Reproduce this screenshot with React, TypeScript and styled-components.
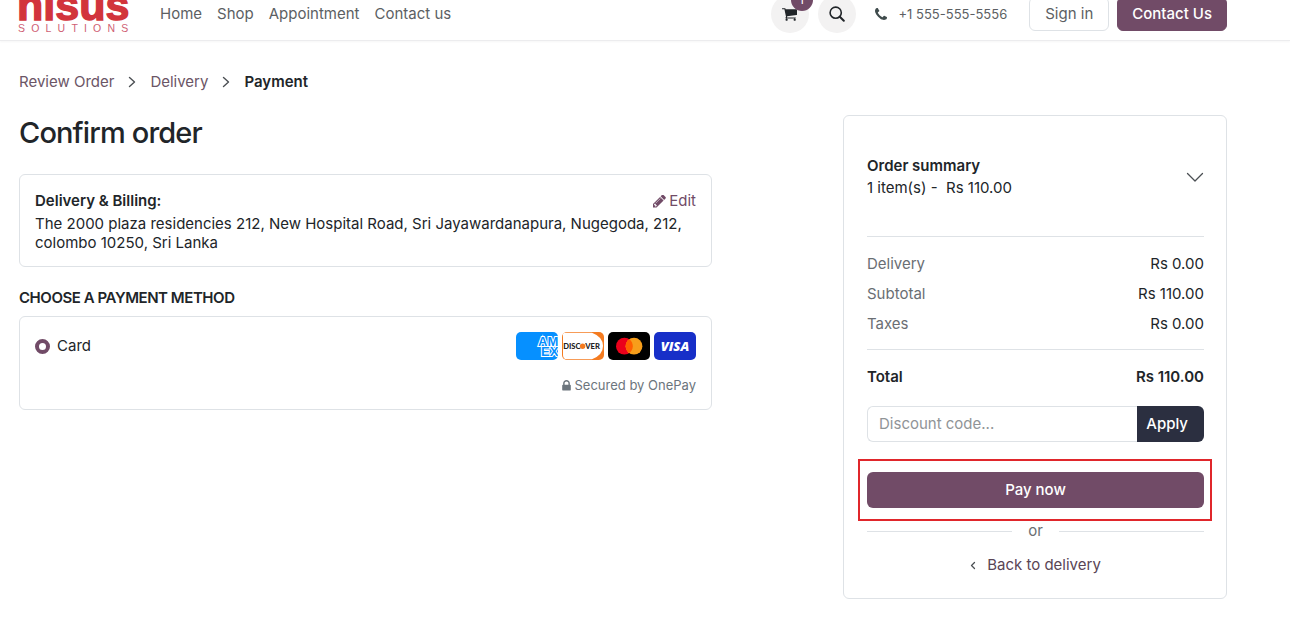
import React from "react";
import styled, { createGlobalStyle } from "styled-components";

const plum = "#714b67";
const ink = "#212529";
const line = "#dee2e6";
const headingTracking = "-0.03em";

const GlobalStyle = createGlobalStyle`
  *, *::before, *::after { box-sizing: border-box; }
  body {
    margin: 0;
    background: #fff;
    color: ${ink};
    font-family: Inter, "Liberation Sans", sans-serif;
    font-size: 15px;
    line-height: 22px;
  }
  button, input { font: inherit; }
  a { text-decoration: none; }
`;

/* ---------- Header ---------- */

const Header = styled.header`
  overflow: hidden;
  padding: 0 63px 7px 18px;
  border-bottom: 1px solid #ececee;
  box-shadow: 0 1px 2px rgba(0, 0, 0, 0.04);
`;

const HeaderRow = styled.div`
  display: flex;
  align-items: center;
  height: 38px;
  margin-top: -5px;
`;

const LogoLink = styled.a`
  display: flex;
  align-self: flex-end;
  margin-right: 29px;
`;

const Nav = styled.nav`
  display: flex;
  gap: 15px;
  margin-right: auto;

  a { color: #5c5f63; }
`;

const RoundButton = styled.button`
  position: relative;
  display: flex;
  align-items: center;
  justify-content: center;
  width: 38px;
  height: 38px;
  margin-right: 9px;
  padding: 0;
  border: 0;
  border-radius: 50%;
  background: #f3f2f2;
  color: ${ink};
`;

const CountBadge = styled.span`
  position: absolute;
  top: -6px;
  right: -4px;
  width: 22px;
  height: 22px;
  border-radius: 50%;
  background: ${plum};
  color: #fff;
  font-size: 12px;
  line-height: 22px;
`;

const Phone = styled.a`
  display: flex;
  align-items: center;
  gap: 12px;
  margin: 0 22px 0 10px;
  color: #5c5f63;
  font-size: 13px;
`;

const HeaderButton = styled.button<{ $filled?: boolean }>`
  height: 34px;
  padding: 0 ${(p) => (p.$filled ? 14 : 15)}px;
  border: 1px solid ${(p) => (p.$filled ? plum : line)};
  border-radius: 6px;
  background: ${(p) => (p.$filled ? plum : "#fff")};
  color: ${(p) => (p.$filled ? "#fff" : "#5c5f63")};
  font-weight: ${(p) => (p.$filled ? 500 : 400)};

  & + & { margin-left: 8px; }
`;

/* ---------- Page ---------- */

const Main = styled.main`
  padding: 32px 63px 20px 19px;
`;

const Breadcrumb = styled.nav`
  display: flex;
  align-items: center;
  gap: 14px;
  line-height: 18px;
  margin-bottom: 24px;

  a { color: #6b5566; }
  strong { font-weight: 600; }
`;

const Columns = styled.div`
  display: grid;
  grid-template-columns: minmax(0, 693fr) minmax(0, 384fr);
  column-gap: 131px;
  align-items: start;
`;

const Title = styled.h1`
  margin: 0 0 23px;
  font-size: 29px;
  line-height: 36px;
  font-weight: 500;
  letter-spacing: ${headingTracking};
`;

const SectionTitle = styled.h2`
  margin: 22px 0 9px;
  font-size: 15px;
  line-height: 18px;
  font-weight: 600;
  letter-spacing: ${headingTracking};
  text-transform: uppercase;
`;

const Card = styled.section`
  border: 1px solid ${line};
  border-radius: 6px;
  background: #fff;
`;

const AddressCard = styled(Card)`
  padding: 16px 15px 14px;
`;

const SpacedRow = styled.div`
  display: flex;
  align-items: center;
  justify-content: space-between;
`;

const AddressHead = styled(SpacedRow)`
  line-height: 20px;
  margin-bottom: 3px;

  strong { font-weight: 600; }
  a {
    display: flex;
    align-items: center;
    gap: 3px;
    color: ${plum};
  }
`;

const Address = styled.p`
  margin: 0;
  line-height: 19px;
`;

const MethodCard = styled(Card)`
  padding: 15px 15px 15px;
`;

const MethodLabel = styled.label`
  display: flex;
  align-items: center;
  gap: 7px;
`;

const Radio = styled.input`
  appearance: none;
  width: 15px;
  height: 15px;
  margin: 0;
  border: 4px solid ${plum};
  border-radius: 50%;
  background: #fff;
`;

const Brands = styled.div`
  display: flex;
  gap: 4px;
`;

const Secured = styled.p`
  display: flex;
  align-items: center;
  justify-content: flex-end;
  gap: 3px;
  margin: 16px 0 0;
  color: #6c757d;
  font-size: 13px;
  line-height: 18px;
`;

/* ---------- Order summary ---------- */

const SummaryCard = styled(Card)`
  padding: 0 22px 22px 23px;
`;

const SummaryToggle = styled.button`
  display: flex;
  align-items: center;
  justify-content: space-between;
  width: 100%;
  padding: 39px 0 37px;
  border: 0;
  border-bottom: 1px solid ${line};
  background: none;
  color: ${ink};
  text-align: left;
  white-space: pre;

  strong, span { display: block; }
  strong { font-weight: 600; }
`;

const Totals = styled.table`
  width: 100%;
  margin-top: 12px;
  border-collapse: collapse;

  th, td {
    padding: 0;
    height: 30px;
    font-weight: 400;
  }
  th { text-align: left; color: #6a6e73; }
  td { text-align: right; }
`;

const TotalRow = styled(SpacedRow)`
  margin-top: 10px;
  padding: 16px 0 18px;
  border-top: 1px solid ${line};
  font-weight: 600;
`;

const Discount = styled.form`
  display: flex;
  height: 36px;
  margin-bottom: 30px;
`;

const DiscountInput = styled.input`
  flex: 1;
  min-width: 0;
  padding: 0 11px;
  border: 1px solid ${line};
  border-right: 0;
  border-radius: 6px 0 0 6px;
  background: #fff;

  &::placeholder { color: #909497; opacity: 1; }
`;

const ApplyButton = styled.button`
  padding: 0 16px 0 9px;
  border: 0;
  border-radius: 0 6px 6px 0;
  background: #2b2f40;
  color: #fff;
  font-weight: 500;
`;

const PayArea = styled.div`
  position: relative;

  &::after {
    content: "";
    position: absolute;
    inset: -13px -8px -13px -9px;
    border: 2px solid #e0262b;
    pointer-events: none;
  }
`;

const PayButton = styled.button`
  display: block;
  width: 100%;
  height: 36px;
  border: 0;
  border-radius: 6px;
  background: ${plum};
  color: #fff;
  font-weight: 500;
`;

const Or = styled.div`
  display: flex;
  align-items: center;
  gap: 16px;
  margin: 12px 0 12px;
  color: #6a6e73;

  &::before, &::after {
    content: "";
    flex: 1;
    border-top: 1px solid ${line};
  }
`;

const BackLink = styled.a`
  display: flex;
  align-items: center;
  justify-content: center;
  gap: 11px;
  color: #5a4555;
`;

/* ---------- Drawings ---------- */

const glyphs = {
  cart: "M704 1536q0 52-38 90t-90 38-90-38-38-90 38-90 90-38 90 38 38 90zm896 0q0 52-38 90t-90 38-90-38-38-90 38-90 90-38 90 38 38 90zm128-1088v512q0 24-16.5 42.5t-40.5 21.5l-1044 122q13 60 13 70 0 16-24 64h920q26 0 45 19t19 45-19 45-45 19h-1024q-26 0-45-19t-19-45q0-11 8-31.5t16-36 21.5-40 15.5-29.5l-177-823h-204q-26 0-45-19t-19-45 19-45 45-19h256q16 0 28.5 6.5t19.5 15.5 13 24.5 8 26 5.5 29.5 4.5 26h1201q26 0 45 19t19 45z",
  phone: "M1600 1240q0 27-10 70.5t-21 68.5q-21 50-122 106-94 51-186 51-27 0-53-3.5t-57.5-12.5-47-14.5-55.5-20.5-49-18q-98-35-175-83-127-79-264-216t-216-264q-48-77-83-175-3-9-18-49t-20.5-55.5-14.5-47-12.5-57.5-3.5-53q0-92 51-186 56-101 106-122 25-11 68.5-21t70.5-10q14 0 21 3 18 6 53 76 11 19 30 54t35 63.5 31 53.5q3 4 17.5 25t21.5 35.5 7 28.5q0 20-28.5 50t-62 55-62 53-28.5 46q0 9 5 22.5t8.5 20.5 14 24 11.5 19q76 137 174 235t235 174q2 1 19 11.5t24 14 20.5 8.5 22.5 5q18 0 46-28.5t53-62 55-62 50-28.5q14 0 28.5 7t35.5 21.5 25 17.5q25 15 53.5 31t63.5 35 54 30q70 35 76 53 3 7 3 21z",
  pencil: "M491 1536l91-91-235-235-91 91v107h128v128h107zm523-928q0-22-22-22-10 0-17 7l-542 542q-7 7-7 17 0 22 22 22 10 0 17-7l542-542q7-7 7-17zm-54-192l416 416-832 832h-416v-416zm683 96q0 53-37 90l-166 166-416-416 166-165q36-38 90-38 53 0 91 38l235 234q37 39 37 91z",
  lock: "M640 768h512v-192q0-106-75-181t-181-75-181 75-75 181v192zm832 96v576q0 40-28 68t-68 28h-960q-40 0-68-28t-28-68v-576q0-40 28-68t68-28h32v-192q0-184 132-316t316-132 316 132 132 316v192h32q40 0 68 28t28 68z",
};

const boxes = {
  cart: "64 128 1664 1664",
  phone: "192 128 1408 1408",
  pencil: "128 192 1536 1536",
  lock: "256 128 1280 1472",
};

function Glyph({ name, size, color = "currentColor" }: { name: keyof typeof glyphs; size: number; color?: string }) {
  return (
    <svg width={size} height={size} viewBox={boxes[name]} fill={color} aria-hidden="true">
      <path d={glyphs[name]} />
    </svg>
  );
}

function Chevron({ points, w, h, stroke }: { points: string; w: number; h: number; stroke: number }) {
  return (
    <svg width={w} height={h} viewBox={`0 0 ${w} ${h}`} fill="none" stroke="#4b4f53" strokeWidth={stroke} strokeLinecap="round" strokeLinejoin="round" aria-hidden="true">
      <polyline points={points} />
    </svg>
  );
}

const CrumbArrow = () => <Chevron points="1.5,1.5 6.5,6 1.5,10.5" w={8} h={12} stroke={1.4} />;

function Logo() {
  return (
    <svg width="113" height="39" viewBox="0 -6 113 39" role="img" aria-label="nisus solutions">
      <text x="-1" y="20" fontFamily="Liberation Sans, sans-serif" fontWeight="700" fontSize="43" fill="#d2343c" stroke="#d2343c" strokeWidth="1.4">nisus</text>
      <text x="0" y="32" fontFamily="Liberation Sans, sans-serif" fontSize="10.5" letterSpacing="6.2" fill="#cf5f74">SOLUTIONS</text>
    </svg>
  );
}

function Amex() {
  return (
    <svg width="42" height="28" viewBox="0 0 42 28" role="img" aria-label="American Express">
      <defs><clipPath id="amex"><rect width="42" height="28" rx="5" /></clipPath></defs>
      <g clipPath="url(#amex)">
        <rect width="42" height="28" fill="#0690ff" />
        <g fontFamily="Liberation Sans, sans-serif" fontWeight="700" fontSize="13" fill="#0690ff" stroke="#fff" strokeWidth="2" paintOrder="stroke">
          <text x="22" y="14">AM</text>
          <text x="25" y="24">EX</text>
        </g>
      </g>
    </svg>
  );
}

function Discover() {
  return (
    <svg width="42" height="28" viewBox="0 0 42 28" role="img" aria-label="Discover">
      <defs><clipPath id="disc"><rect width="42" height="28" rx="5" /></clipPath></defs>
      <g clipPath="url(#disc)">
        <rect width="42" height="28" fill="#f47b20" />
        <path d="M1 0.8H30Q41 5 41 14Q41 23 30 27.2H5Q1 27.2 1 23Z" fill="#fff" />
        <g fontFamily="Lato, sans-serif" fontWeight="900" fontSize="7.6" fill="#222">
          <text x="1.2" y="16.8">DISC</text>
          <text x="23.2" y="16.8">VER</text>
        </g>
        <circle cx="20.6" cy="14.2" r="2.7" fill="#f47b20" />
      </g>
    </svg>
  );
}

function Mastercard() {
  return (
    <svg width="42" height="28" viewBox="0 0 42 28" role="img" aria-label="Mastercard">
      <rect width="42" height="28" rx="5" fill="#000" />
      <circle cx="16.4" cy="14.2" r="8.4" fill="#eb001b" />
      <circle cx="26" cy="14.2" r="8.4" fill="#f79e1b" />
      <path d="M21.2 7.3A8.4 8.4 0 0 1 21.2 21.1A8.4 8.4 0 0 1 21.2 7.3Z" fill="#ff5f00" />
    </svg>
  );
}

function Visa() {
  return (
    <svg width="42" height="28" viewBox="0 0 42 28" role="img" aria-label="Visa">
      <rect width="42" height="28" rx="5" fill="#172fc8" />
      <text x="21" y="19" textAnchor="middle" fontFamily="Open Sans, sans-serif" fontStyle="italic" fontWeight="800" fontSize="13" fill="#fff">VISA</text>
    </svg>
  );
}

/* ---------- App ---------- */

const charges = [
  ["Delivery", "Rs 0.00"],
  ["Subtotal", "Rs 110.00"],
  ["Taxes", "Rs 0.00"],
];

export default function App() {
  return (
    <>
      <GlobalStyle />
      <Header>
        <HeaderRow>
          <LogoLink href="#home"><Logo /></LogoLink>
          <Nav>
            <a href="#home">Home</a>
            <a href="#shop">Shop</a>
            <a href="#appointment">Appointment</a>
            <a href="#contact">Contact us</a>
          </Nav>
          <RoundButton aria-label="Cart">
            <Glyph name="cart" size={15} />
            <CountBadge>1</CountBadge>
          </RoundButton>
          <RoundButton aria-label="Search">
            <svg width="16" height="16" viewBox="0 0 16 16" fill="none" stroke="currentColor" aria-hidden="true">
              <circle cx="6.7" cy="6.7" r="5.6" strokeWidth="1.6" />
              <path d="M10.8 10.8L14.8 14.8" strokeWidth="2" strokeLinecap="round" />
            </svg>
          </RoundButton>
          <Phone href="tel:+15555555556">
            <Glyph name="phone" size={12} color="#3f4b4c" />
            +1 555-555-5556
          </Phone>
          <HeaderButton>Sign in</HeaderButton>
          <HeaderButton $filled>Contact Us</HeaderButton>
        </HeaderRow>
      </Header>

      <Main>
        <Breadcrumb aria-label="Checkout steps">
          <a href="#review">Review Order</a>
          <CrumbArrow />
          <a href="#delivery">Delivery</a>
          <CrumbArrow />
          <strong>Payment</strong>
        </Breadcrumb>

        <Columns>
          <div>
            <Title>Confirm order</Title>
            <AddressCard>
              <AddressHead>
                <strong>Delivery &amp; Billing:</strong>
                <a href="#edit"><Glyph name="pencil" size={13} />Edit</a>
              </AddressHead>
              <Address>
                The 2000 plaza residencies 212, New Hospital Road, Sri Jayawardanapura, Nugegoda, 212, colombo 10250, Sri Lanka
              </Address>
            </AddressCard>

            <SectionTitle>Choose a payment method</SectionTitle>
            <MethodCard>
              <SpacedRow>
                <MethodLabel>
                  <Radio type="radio" name="method" defaultChecked />
                  Card
                </MethodLabel>
                <Brands>
                  <Amex />
                  <Discover />
                  <Mastercard />
                  <Visa />
                </Brands>
              </SpacedRow>
              <Secured><Glyph name="lock" size={11} />Secured by OnePay</Secured>
            </MethodCard>
          </div>

          <SummaryCard>
            <SummaryToggle aria-expanded="false">
              <div>
                <strong>Order summary</strong>
                <span>{"1 item(s) -  Rs 110.00"}</span>
              </div>
              <Chevron points="1.5,1.5 9,9 16.5,1.5" w={18} h={11} stroke={1.3} />
            </SummaryToggle>
            <Totals>
              <tbody>
                {charges.map(([label, amount]) => (
                  <tr key={label}>
                    <th scope="row">{label}</th>
                    <td>{amount}</td>
                  </tr>
                ))}
              </tbody>
            </Totals>
            <TotalRow>
              <span>Total</span>
              <span>Rs 110.00</span>
            </TotalRow>
            <Discount onSubmit={(e) => e.preventDefault()}>
              <DiscountInput type="text" placeholder="Discount code..." aria-label="Discount code" />
              <ApplyButton type="submit">Apply</ApplyButton>
            </Discount>
            <PayArea>
              <PayButton>Pay now</PayButton>
            </PayArea>
            <Or>or</Or>
            <BackLink href="#delivery">
              <Chevron points="4.5,1.5 1.5,4.5 4.5,7.5" w={6} h={9} stroke={1.3} />
              Back to delivery
            </BackLink>
          </SummaryCard>
        </Columns>
      </Main>
    </>
  );
}
